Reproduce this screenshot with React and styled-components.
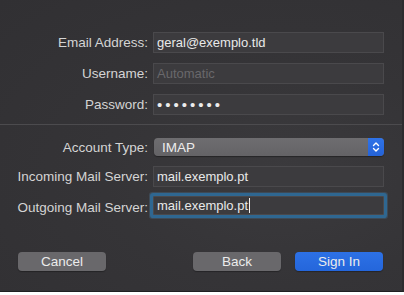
import styled, { createGlobalStyle } from 'styled-components'

const GlobalStyle = createGlobalStyle`
    html, body {
        margin:0;
        padding:0;
        background:#ffffff;
    }
    body {
        font-family:'Liberation Sans', Arial, sans-serif;
        -webkit-font-smoothing:antialiased;
    }
`

const Window = styled.div`
    width:404px;
    height:292px;
    box-sizing:border-box;
    display:flex;
    flex-direction:column;
    background:radial-gradient(ellipse at 70% 60%, #3b3a3d 0%, #353437 45%, #313033 100%);
    border-bottom:1px solid #1f1f21;
    border-right:2px solid #2c2b2e;
    color:#d6d6d6;
    font-size:13px;
`

const Section = styled.div`
    display:grid;
    grid-template-columns:148px 231px;
    grid-template-rows:${p => p.$rows || '21px 21px 21px'};
    column-gap:5px;
    row-gap:10px;
    padding:${p => p.$pad};
    border-top:${p => p.$divided ? '1px solid #4c4b4e' : 'none'};
`

const Label = styled.label`
    display:flex;
    align-items:center;
    justify-content:flex-end;
    color:#d4d4d4;
    font-size:13.5px;
    white-space:nowrap;
`

const Field = styled.div`
    display:flex;
    align-items:center;
    box-sizing:border-box;
    height:${p => p.$focused ? '19px' : '21px'};
    align-self:${p => p.$focused ? 'start' : 'stretch'};
    margin-top:${p => p.$focused ? '-1px' : '0'};
    padding-left:3px;
    background:#3c3b3e;
    border:1px solid #4a494c;
    color:${p => p.$placeholder ? '#69686b' : '#e9e9e9'};
    box-shadow:${p => p.$focused ? '0 0 0 3px #2f6791, 0 0 0 4px #3d4a57' : 'none'};
    border-radius:${p => p.$focused ? '1px' : '0'};
    white-space:nowrap;
    overflow:hidden;
`

const Dots = styled.span`
    font-size:15px;
    letter-spacing:3px;
    color:#ececec;
    line-height:1;
`

const Caret = styled.span`
    display:inline-block;
    width:1px;
    height:15px;
    margin-left:1px;
    background:#f2f2f2;
`

const Popup = styled.div`
    display:flex;
    align-items:stretch;
    margin-left:1px;
    border-radius:4px;
    overflow:hidden;
    background:linear-gradient(#6e6d70, #646366);
    box-shadow:0 1px 1px rgba(0,0,0,.35);
`

const PopupValue = styled.span`
    flex:1;
    display:flex;
    align-items:center;
    padding-left:8px;
    color:#ececec;
    font-size:13.5px;
    font-weight:500;
`

const Stepper = styled.span`
    width:16px;
    display:flex;
    align-items:center;
    justify-content:center;
    background:linear-gradient(#2f73e8, #2563d8);
`

const Footer = styled.div`
    margin-top:auto;
    display:flex;
    gap:14px;
    padding:0 19px 20px 18px;
`

const Button = styled.button`
    width:88px;
    height:19px;
    padding:0;
    border:none;
    border-radius:4px;
    font-family:inherit;
    font-size:13.5px;
    color:#ececec;
    background:${p => p.$primary ? 'linear-gradient(#2d71e6, #2466db)' : '#69686b'};
    box-shadow:0 1px 1px rgba(0,0,0,.3);
    margin-right:${p => p.$push ? 'auto' : '0'};
`

export default function App() {
    return (
        <>
            <GlobalStyle />
            <Window>
                <Section $pad='32px 0 9px 0'>
                    <Label>Email Address:</Label>
                    <Field>geral@exemplo.tld</Field>
                    <Label>Username:</Label>
                    <Field $placeholder>Automatic</Field>
                    <Label>Password:</Label>
                    <Field><Dots>••••••••</Dots></Field>
                </Section>

                <Section $divided $pad='13px 0 0 0' $rows='18px 21px 21px'>
                    <Label>Account Type:</Label>
                    <Popup>
                        <PopupValue>IMAP</PopupValue>
                        <Stepper>
                            <svg width='8' height='12' viewBox='0 0 8 12' fill='none' stroke='#ffffff' strokeWidth='1.4' strokeLinecap='round' strokeLinejoin='round'>
                                <path d='M1.5 4.5 L4 2 L6.5 4.5' />
                                <path d='M1.5 7.5 L4 10 L6.5 7.5' />
                            </svg>
                        </Stepper>
                    </Popup>
                    <Label>Incoming Mail Server:</Label>
                    <Field>mail.exemplo.pt</Field>
                    <Label>Outgoing Mail Server:</Label>
                    <Field $focused>mail.exemplo.pt<Caret /></Field>
                </Section>

                <Footer>
                    <Button $push>Cancel</Button>
                    <Button>Back</Button>
                    <Button $primary>Sign In</Button>
                </Footer>
            </Window>
        </>
    )
}
